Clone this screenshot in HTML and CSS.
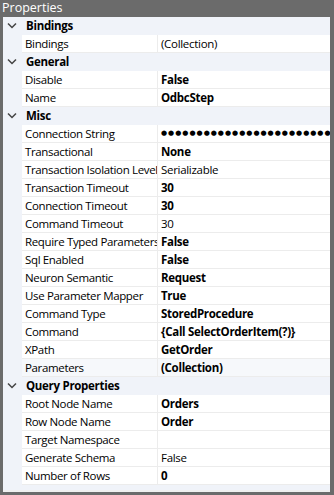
FILE: index.html
```html
<!DOCTYPE html>
<html lang="en">
<head>
    <meta charset="UTF-8">
    <title>Properties</title>
    <link rel="stylesheet" href="styles.css">
</head>
<body>
    <div class="panel">
        <div class="title">Properties</div>
        <div class="grid">
            <div class="cat"><span class="gutter"><svg class="chev" width="10" height="7" viewBox="0 0 10 7"><path d="M1 1.5 L5 5.5 L9 1.5" fill="none" stroke="#444" stroke-width="1.5"/></svg></span><span class="label">Bindings</span></div>
            <div class="row"><span class="gutter"></span><span class="name">Bindings</span><span class="value">(Collection)</span></div>

            <div class="cat"><span class="gutter"><svg class="chev" width="10" height="7" viewBox="0 0 10 7"><path d="M1 1.5 L5 5.5 L9 1.5" fill="none" stroke="#444" stroke-width="1.5"/></svg></span><span class="label">General</span></div>
            <div class="row"><span class="gutter"></span><span class="name">Disable</span><span class="value b">False</span></div>
            <div class="row"><span class="gutter"></span><span class="name">Name</span><span class="value b">OdbcStep</span></div>

            <div class="cat"><span class="gutter"><svg class="chev" width="10" height="7" viewBox="0 0 10 7"><path d="M1 1.5 L5 5.5 L9 1.5" fill="none" stroke="#444" stroke-width="1.5"/></svg></span><span class="label">Misc</span></div>
            <div class="row"><span class="gutter"></span><span class="name">Connection String</span><span class="value dots">●●●●●●●●●●●●●●●●●●●●●●●●●●●●●●●●●●●●●●●●</span></div>
            <div class="row"><span class="gutter"></span><span class="name">Transactional</span><span class="value b">None</span></div>
            <div class="row"><span class="gutter"></span><span class="name">Transaction Isolation Level</span><span class="value">Serializable</span></div>
            <div class="row"><span class="gutter"></span><span class="name">Transaction Timeout</span><span class="value b">30</span></div>
            <div class="row"><span class="gutter"></span><span class="name">Connection Timeout</span><span class="value b">30</span></div>
            <div class="row"><span class="gutter"></span><span class="name">Command Timeout</span><span class="value">30</span></div>
            <div class="row"><span class="gutter"></span><span class="name">Require Typed Parameters</span><span class="value b">False</span></div>
            <div class="row"><span class="gutter"></span><span class="name">Sql Enabled</span><span class="value b">False</span></div>
            <div class="row"><span class="gutter"></span><span class="name">Neuron Semantic</span><span class="value b">Request</span></div>
            <div class="row"><span class="gutter"></span><span class="name">Use Parameter Mapper</span><span class="value b">True</span></div>
            <div class="row"><span class="gutter"></span><span class="name">Command Type</span><span class="value b">StoredProcedure</span></div>
            <div class="row"><span class="gutter"></span><span class="name">Command</span><span class="value b">{Call SelectOrderItem(?)}</span></div>
            <div class="row"><span class="gutter"></span><span class="name">XPath</span><span class="value b">GetOrder</span></div>
            <div class="row selected"><span class="gutter"></span><span class="name">Parameters</span><span class="value b">(Collection)</span></div>

            <div class="cat"><span class="gutter"><svg class="chev" width="10" height="7" viewBox="0 0 10 7"><path d="M1 1.5 L5 5.5 L9 1.5" fill="none" stroke="#444" stroke-width="1.5"/></svg></span><span class="label">Query Properties</span></div>
            <div class="row"><span class="gutter"></span><span class="name">Root Node Name</span><span class="value b">Orders</span></div>
            <div class="row"><span class="gutter"></span><span class="name">Row Node Name</span><span class="value b">Order</span></div>
            <div class="row"><span class="gutter"></span><span class="name">Target Namespace</span><span class="value"></span></div>
            <div class="row"><span class="gutter"></span><span class="name">Generate Schema</span><span class="value">False</span></div>
            <div class="row"><span class="gutter"></span><span class="name">Number of Rows</span><span class="value b">0</span></div>
        </div>
        <div class="footer"></div>
    </div>
</body>
</html>
```

FILE: styles.css
```css
body { margin: 0; background: #f0f0f0; font-family: "Open Sans", "Noto Sans", sans-serif; font-size: 11.5px; letter-spacing: -0.3px; color: #000; }
.panel { width: 334px; height: 495px; background: #6b6b6b; display: flex; flex-direction: column; overflow: hidden; }
.title { height: 16px; line-height: 15px; padding-left: 2px; color: #fff; font-size: 12.5px; letter-spacing: 0; }
.grid { margin: 1px 4px 0 3px; background: #f0f3f9; }
.cat, .row { display: flex; height: 18px; line-height: 17px; }
.gutter { width: 19px; flex: none; display: flex; align-items: center; justify-content: center; }
.chev { margin-left: -2px; margin-top: -1px; }
.cat .label { font-weight: bold; padding-left: 4px; }
.row .name, .row .value { background: #fff; border-bottom: 1px solid #ececec; white-space: nowrap; overflow: hidden; padding-left: 4px; }
.row .name { width: 132px; flex: none; padding-left: 3px; letter-spacing: -0.35px; border-right: 1px solid #ececec; }
.row .value { flex: 1; padding-left: 3px; }
.row.selected .name, .row.selected .value { background: #f6f8fb; }
.b { font-weight: bold; }
.dots { font-family: "DejaVu Sans", sans-serif; font-size: 7px; letter-spacing: 1px; }
.footer { flex: 1; margin: 0 4px 3px 3px; background: #f0f3f9; border-top: 5px solid #f0f3f9; box-shadow: inset 0 -2px 0 #f0f0f0; }
```
